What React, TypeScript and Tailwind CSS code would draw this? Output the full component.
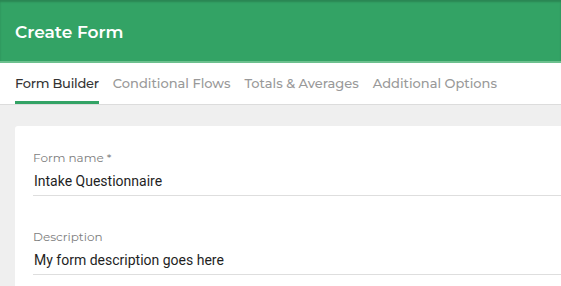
import React from "react";

const tabs = ["Form Builder", "Conditional Flows", "Totals & Averages", "Additional Options"];

function Field({ label, value }: { label: string; value: string }) {
  return (
    <div className="border-b border-[#dedede] pb-[5px]">
      <p className="text-[12px] leading-[16px] text-[#7d7d7d] font-['Montserrat','DejaVu_Sans',sans-serif]">
        {label}
      </p>
      <p className="mt-[6px] pl-[1px] text-[14px] leading-[18px] text-[#1f1f1f] font-['Roboto',sans-serif]">
        {value}
      </p>
    </div>
  );
}

export default function App() {
  return (
    <div className="w-[561px] h-[286px] overflow-hidden bg-[#efefef] font-['Montserrat','DejaVu_Sans',sans-serif]">
      <div className="h-[61px] bg-[#33a365] shadow-[inset_0_2px_2px_rgba(0,0,0,0.18)] flex items-center px-[15px] pt-[5px]">
        <h1 className="text-white text-[17px] font-semibold">Create Form</h1>
      </div>
      <div className="h-[2px] bg-[#6cc08e]" />
      <div className="h-[42px] bg-white border-b border-[#dcdcdc] flex items-end gap-[14px] px-[15px]">
        {tabs.map((t, i) => (
          <div
            key={t}
            className={
              i === 0
                ? "h-full flex items-center border-b-[3px] border-[#33a365] pt-[4px] text-[#333] text-[13px] font-medium tracking-[-0.25px]"
                : "h-full flex items-center border-b-[3px] border-transparent pt-[4px] text-[#999] text-[13px] font-medium"
            }
          >
            {t}
          </div>
        ))}
      </div>
      <div className="pt-[21px] pl-[15px]">
        <div className="bg-white rounded-tl-[3px] pl-[18px] pt-[24px] h-[200px] flex flex-col gap-[33px]">
          <Field label="Form name *" value="Intake Questionnaire" />
          <Field label="Description" value="My form description goes here" />
        </div>
      </div>
    </div>
  );
}
